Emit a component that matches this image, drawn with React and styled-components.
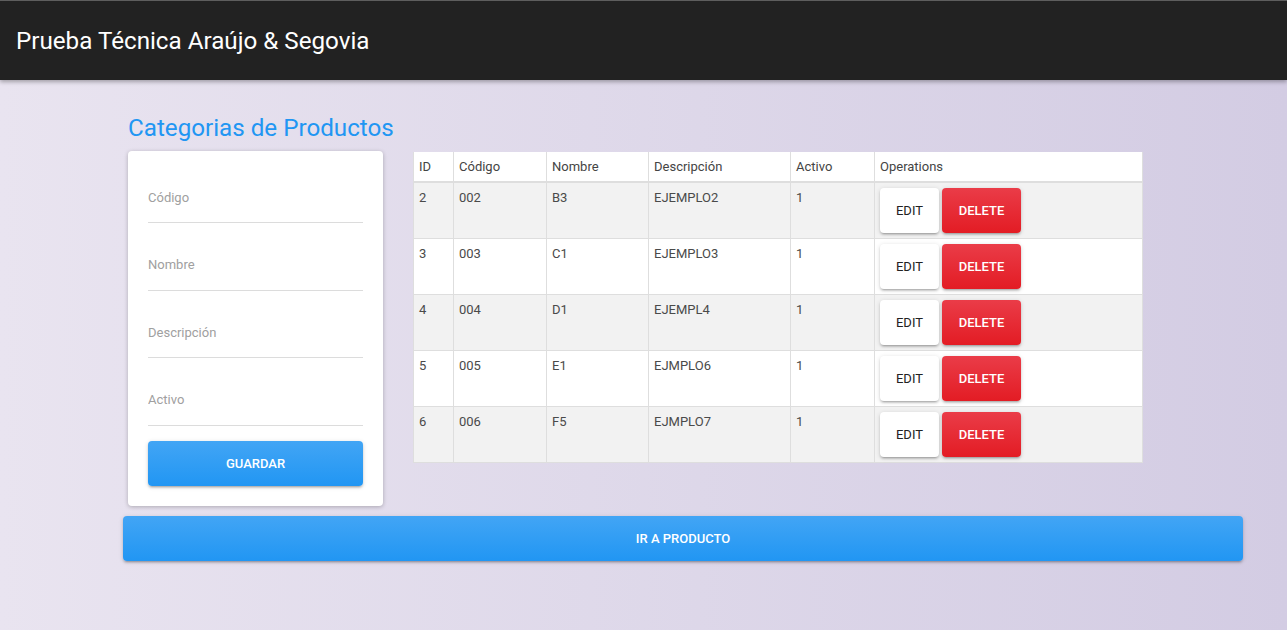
import React from "react";
import styled, { createGlobalStyle } from "styled-components";

const Global = createGlobalStyle`
  html, body { margin: 0; padding: 0; }
  body {
    min-height: 100vh;
    font-family: Roboto, "Liberation Sans", Arial, sans-serif;
    background: linear-gradient(to right, #e9e4f0, #d3cce3);
  }
  * { box-sizing: border-box; }
`;

const Page = styled.div`
  min-height: 100vh;
  display: flex;
  flex-direction: column;
`;

const TopBar = styled.header`
  height: 80px;
  background: #222222;
  border-top: 1px solid #5e5e5e;
  display: flex;
  align-items: center;
  padding: 0 16px;
  box-shadow: 0 2px 4px rgba(0, 0, 0, 0.3);
`;

const Brand = styled.h1`
  margin: 0;
  font-size: 24.2px;
  font-weight: 400;
  color: #ffffff;
  line-height: 30px;
`;

const Main = styled.main`
  padding: 33px 0 40px 123px;
  width: 1243px;
`;

const Inner = styled.div`
  padding: 0 5px;
`;

const Title = styled.h2`
  margin: 0 0 8px;
  font-size: 24.2px;
  line-height: 30px;
  font-weight: 400;
  color: #2196f3;
`;

const Row = styled.div`
  display: flex;
  align-items: flex-start;
  gap: 31px;
`;

const Card = styled.form`
  width: 255px;
  background: #fff;
  border-radius: 4px;
  padding: 20px;
  box-shadow: 0 1px 4px rgba(0, 0, 0, 0.25);
  display: flex;
  flex-direction: column;
  gap: 15.5px;
`;

const Field = styled.input`
  display: block;
  width: 100%;
  height: 52px;
  border: none;
  border-bottom: 1px solid #dcdcdc;
  padding: 17px 0 16px;
  font-family: Roboto, "Liberation Sans", Arial, sans-serif;
  font-size: 13px;
  line-height: 18px;
  color: #333;
  background: transparent;
  outline: none;
  &::placeholder { color: #a0a0a0; }
`;

const Button = styled.button`
  display: flex;
  align-items: center;
  justify-content: center;
  height: 45px;
  width: ${(p) => p.$width || "auto"};
  border: none;
  border-radius: 4px;
  font-family: Roboto, "Liberation Sans", Arial, sans-serif;
  font-size: 13px;
  font-weight: ${(p) => (p.$variant === "plain" ? 400 : 500)};
  text-transform: uppercase;
  cursor: pointer;
  color: ${(p) => (p.$variant === "plain" ? "#222" : "#fff")};
  background: ${(p) =>
    p.$variant === "danger"
      ? "linear-gradient(to bottom, #ea3c48, #e31c24)"
      : p.$variant === "plain"
      ? "#ffffff"
      : "linear-gradient(to bottom, #42a5f5, #2196f3)"};
  box-shadow: 0 2px 2px rgba(0, 0, 0, 0.14), 0 1px 5px rgba(0, 0, 0, 0.14),
    0 3px 1px -2px rgba(0, 0, 0, 0.12);
`;

const Table = styled.table`
  margin-top: 1px;
  margin-left: -1px;
  width: 729px;
  border-collapse: collapse;
  table-layout: fixed;
  background: #fff;
  font-size: 13px;
  color: #444;
`;

const Th = styled.th`
  height: 30px;
  padding: 0 5px;
  text-align: left;
  font-weight: 400;
  color: #444;
  border: 1px solid #dedede;
  border-bottom: 2px solid #dedede;
  border-top: none;
`;

const Tr = styled.tr`
  height: 55.6px;
  background: ${(p) => (p.$odd ? "#f2f2f2" : "#ffffff")};
`;

const Td = styled.td`
  vertical-align: top;
  padding: 6px 5px 0;
  line-height: 18px;
  border: 1px solid #dedede;
  color: #4a4a4a;
`;

const Ops = styled.div`
  display: flex;
  gap: 3px;
`;

const OpsCell = styled(Td)`
  padding: 5px 5px 5px;
`;

const Footer = styled.div`
  margin-top: 10px;
`;

const rows = [
  { id: 2, code: "002", name: "B3", desc: "EJEMPLO2", active: 1 },
  { id: 3, code: "003", name: "C1", desc: "EJEMPLO3", active: 1 },
  { id: 4, code: "004", name: "D1", desc: "EJEMPL4", active: 1 },
  { id: 5, code: "005", name: "E1", desc: "EJMPLO6", active: 1 },
  { id: 6, code: "006", name: "F5", desc: "EJMPLO7", active: 1 },
];

const cols = [
  ["ID", 40],
  ["Código", 93],
  ["Nombre", 102],
  ["Descripción", 142],
  ["Activo", 84],
  ["Operations", 268],
];

export default function App() {
  return (
    <Page>
      <Global />
      <TopBar>
        <Brand>Prueba Técnica Araújo &amp; Segovia</Brand>
      </TopBar>
      <Main>
        <Inner>
          <Title>Categorias de Productos</Title>
          <Row>
            <Card onSubmit={(e) => e.preventDefault()}>
              <Field placeholder="Código" />
              <Field placeholder="Nombre" />
              <Field placeholder="Descripción" />
              <Field placeholder="Activo" />
              <Button $width="100%" type="submit">Guardar</Button>
            </Card>
            <Table>
              <colgroup>
                {cols.map(([n, w]) => (
                  <col key={n} style={{ width: w }} />
                ))}
              </colgroup>
              <thead>
                <tr>
                  {cols.map(([n]) => (
                    <Th key={n}>{n}</Th>
                  ))}
                </tr>
              </thead>
              <tbody>
                {rows.map((r, i) => (
                  <Tr key={r.id} $odd={i % 2 === 0}>
                    <Td>{r.id}</Td>
                    <Td>{r.code}</Td>
                    <Td>{r.name}</Td>
                    <Td>{r.desc}</Td>
                    <Td>{r.active}</Td>
                    <OpsCell>
                      <Ops>
                        <Button $variant="plain" $width="59px">Edit</Button>
                        <Button $variant="danger" $width="79px">Delete</Button>
                      </Ops>
                    </OpsCell>
                  </Tr>
                ))}
              </tbody>
            </Table>
          </Row>
        </Inner>
        <Footer>
          <Button $width="1120px">Ir a Producto</Button>
        </Footer>
      </Main>
    </Page>
  );
}
